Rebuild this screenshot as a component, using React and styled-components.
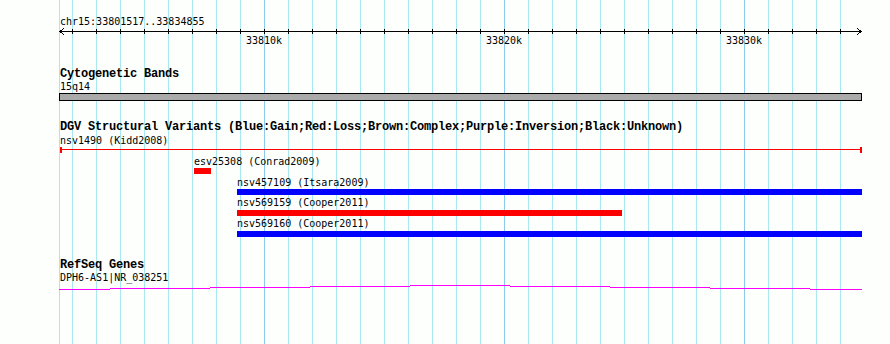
import styled, { createGlobalStyle } from "styled-components";

const GlobalStyle = createGlobalStyle`
    html, body {
        margin: 0;
        padding: 0;
        background: #fdfffd;
    }
`

const Page = styled.div`
    position: relative;
    width: 890px;
    height: 344px;
    overflow: hidden;
    background: #fdfffd;
    font-family: "DejaVu Sans Mono", "Liberation Mono", monospace;
    color: #000;
`

// vertical grid drawn behind all the tracks
const GridLayer = styled.svg`
    position: absolute;
    left: 0;
    top: 0;
    z-index: 0;
`

const Tracks = styled.div`
    position: relative;
    z-index: 1;
    display: flex;
    flex-direction: column;
`

const Drawing = styled.svg`
    display: block;
    shape-rendering: crispEdges;
    text {
        font-family: "DejaVu Sans Mono", "Liberation Mono", monospace;
        font-size: 10px;
        fill: #000;
    }
`

const Track = styled.div`
    display: flex;
    flex-direction: column;
    margin-top: ${(props) => props.gap || 0}px;
`

const TrackTitle = styled.div`
    padding-left: 60px;
    font-family: "Liberation Mono", monospace;
    font-size: 12px;
    font-weight: bold;
    line-height: 13px;
    height: 13px;
    letter-spacing: -0.2px;
    white-space: nowrap;
`

const TrackLabel = styled.div`
    padding-left: 60px;
    font-size: 10px;
    line-height: ${(props) => props.lh || 13}px;
    height: ${(props) => props.lh || 13}px;
    white-space: nowrap;
`

const BandBar = styled.div`
    margin-left: 59px;
    width: 803px;
    height: 8px;
    box-sizing: border-box;
    border: 1px solid #000;
    background: #aaaaaa;
`

const gridXs = [59]
for (let x = 72; x <= 840; x += 24) gridXs.push(x)
const majors = [264, 504, 744]

const tickXs = []
for (let x = 72; x <= 840; x += 24) tickXs.push(x)

const variants = [
    { label: "esv25308 (Conrad2009)", x: 194, end: 211, textY: 18, barY: 21, color: "#ff0000" },
    { label: "nsv457109 (Itsara2009)", x: 237, end: 862, textY: 39, barY: 42, color: "#0000ff" },
    { label: "nsv569159 (Cooper2011)", x: 237, end: 622, textY: 59, barY: 63, color: "#ff0000" },
    { label: "nsv569160 (Cooper2011)", x: 237, end: 862, textY: 80, barY: 84, color: "#0000ff" },
]

// intron "hat" of the gene, stepped like the original bitmap
const geneSteps = [
    [59, 110, 4], [110, 210, 3], [210, 310, 2], [310, 410, 1], [410, 510, 0],
    [510, 610, 1], [610, 710, 2], [710, 810, 3], [810, 862, 4],
]

const App = () => {
    return (
        <>
            <GlobalStyle />
            <Page>
                <GridLayer width="890" height="344">
                    {gridXs.map((x) => (
                        <line key={x} x1={x + 0.5} x2={x + 0.5} y1="0" y2="344"
                            stroke={majors.includes(x) ? "#8ccbec" : "#a9e8f0"} strokeWidth="1" />
                    ))}
                </GridLayer>
                <Tracks>
                    <Drawing width="890" height="68">
                        <text x="60" y="25">chr15:33801517..33834855</text>
                        <line x1="60" x2="861" y1="31.5" y2="31.5" stroke="#000" />
                        <polyline points="64,28 60,31.5 64,35" fill="none" stroke="#000" />
                        <polyline points="857,28 861,31.5 857,35" fill="none" stroke="#000" />
                        {tickXs.map((x) => (
                            <line key={x} x1={x + 0.5} x2={x + 0.5} y1="29" y2="34" stroke="#000" />
                        ))}
                        <text x="264" y="44" textAnchor="middle">33810k</text>
                        <text x="504" y="44" textAnchor="middle">33820k</text>
                        <text x="744" y="44" textAnchor="middle">33830k</text>
                    </Drawing>

                    <Track>
                        <TrackTitle>Cytogenetic Bands</TrackTitle>
                        <TrackLabel lh={12}>15q14</TrackLabel>
                        <BandBar />
                    </Track>

                    <Track gap={20}>
                        <TrackTitle>DGV Structural Variants (Blue:Gain;Red:Loss;Brown:Complex;Purple:Inversion;Black:Unknown)</TrackTitle>
                        <TrackLabel>nsv1490 (Kidd2008)</TrackLabel>
                        <Drawing width="890" height="94">
                            <line x1="60" x2="862" y1="2.5" y2="2.5" stroke="#ff0000" />
                            <rect x="60" y="0" width="2" height="6" fill="#ff0000" />
                            <rect x="860" y="0" width="2" height="6" fill="#ff0000" />
                            {variants.map((v) => (
                                <g key={v.label}>
                                    <text x={v.x} y={v.textY}>{v.label}</text>
                                    <rect x={v.x} y={v.barY} width={v.end - v.x} height="6" fill={v.color} />
                                </g>
                            ))}
                        </Drawing>
                    </Track>

                    <Track gap={18}>
                        <TrackTitle>RefSeq Genes</TrackTitle>
                        <TrackLabel lh={12}>DPH6-AS1|NR_038251</TrackLabel>
                        <Drawing width="890" height="10">
                            {geneSteps.map(([a, b, y]) => (
                                <rect key={a} x={a} y={y + 1} width={b - a} height="1" fill="#ff00ff" />
                            ))}
                        </Drawing>
                    </Track>
                </Tracks>
            </Page>
        </>
    )
}

export default App;
